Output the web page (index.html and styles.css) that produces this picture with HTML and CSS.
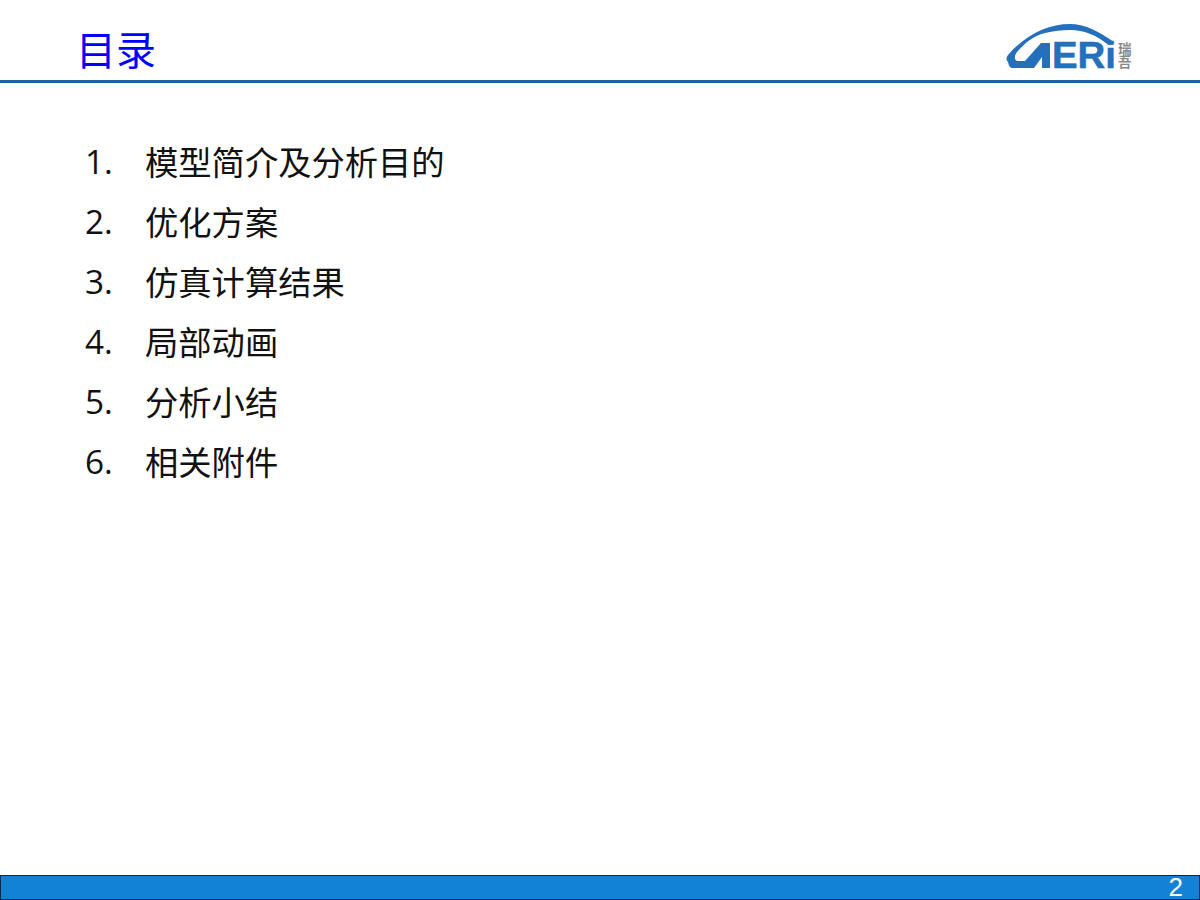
FILE: index.html
```html
<!DOCTYPE html>
<html lang="zh-CN">
<head>
<meta charset="utf-8">
<title>目录</title>
<link rel="stylesheet" href="styles.css">
</head>
<body>
<div class="slide">
  <header class="header">
    <h1 class="title">目录</h1>
    <svg class="logo" width="130" height="58" viewBox="0 0 130 58" aria-label="AERI">
      <path class="logo-fill" d="M2 41 C3 45 4 47 7 47 L28 47 L36 36 L36 47 L44 47 L44 22 L35 22 L19 40 L12 40 C8 40 8 35 11 31 C19 22 27 15 39 12 C47 10 56 9 64 9 C78 9 90 14 101 23 L109 22 C93 10 78 3 64 3 C42 3 19 14 2 34 C0 37 0 39 2 41 Z"/>
      <text class="logo-letters" x="46" y="47" textLength="64" lengthAdjust="spacingAndGlyphs">ERi</text>
      <text class="logo-cn"><tspan x="112" y="33">瑞</tspan><tspan x="112" y="46">吾</tspan></text>
    </svg>
  </header>
  <ol class="toc">
    <li class="toc-item"><span class="num">1.</span><span>模型简介及分析目的</span></li>
    <li class="toc-item"><span class="num">2.</span><span>优化方案</span></li>
    <li class="toc-item"><span class="num">3.</span><span>仿真计算结果</span></li>
    <li class="toc-item"><span class="num">4.</span><span>局部动画</span></li>
    <li class="toc-item"><span class="num">5.</span><span>分析小结</span></li>
    <li class="toc-item"><span class="num">6.</span><span>相关附件</span></li>
  </ol>
  <footer class="footer"><span class="page">2</span></footer>
</div>
</body>
</html>
```
FILE: styles.css
```css
html, body { margin: 0; padding: 0; background: #fff; }
.slide {
  width: 1200px; height: 900px; display: flex; flex-direction: column;
  overflow: hidden; background: #fff;
  font-family: "Noto Sans CJK SC", "Noto Sans", sans-serif;
}
.header {
  height: 80px; flex: none;
  display: flex; justify-content: space-between; align-items: flex-start;
  border-bottom: 3px solid #1f5fa6; padding: 0 64px 0 76px;
}
.title { margin: 19px 0 0; font-size: 40px; line-height: 58px; font-weight: 400; color: #0000ff; }
.logo { margin-top: 21px; }
.logo-fill { fill: #2470ba; }
.logo-letters { font: 700 36px "Liberation Sans", sans-serif; fill: #2470ba; stroke: #2470ba; stroke-width: 0.5; }
.logo-cn { font: 700 13.5px "Noto Sans CJK SC", sans-serif; fill: #8a8a8a; }
.toc { list-style: none; margin: 48px 0 0; padding: 0 0 0 85px; flex: 1; }
.toc-item { display: flex; height: 60px; line-height: 60px; font-size: 33.3px; color: #111; }
.num { width: 60px; flex: none; font-family: "Open Sans", sans-serif; }
.footer {
  height: 23px; flex: none; display: flex; justify-content: flex-end; align-items: center;
  background: #1282d6; border: 1px solid #0a2a4a; padding-right: 16px;
}
.page { font: 400 26px/23px "Liberation Sans", sans-serif; color: #fff; }
```
